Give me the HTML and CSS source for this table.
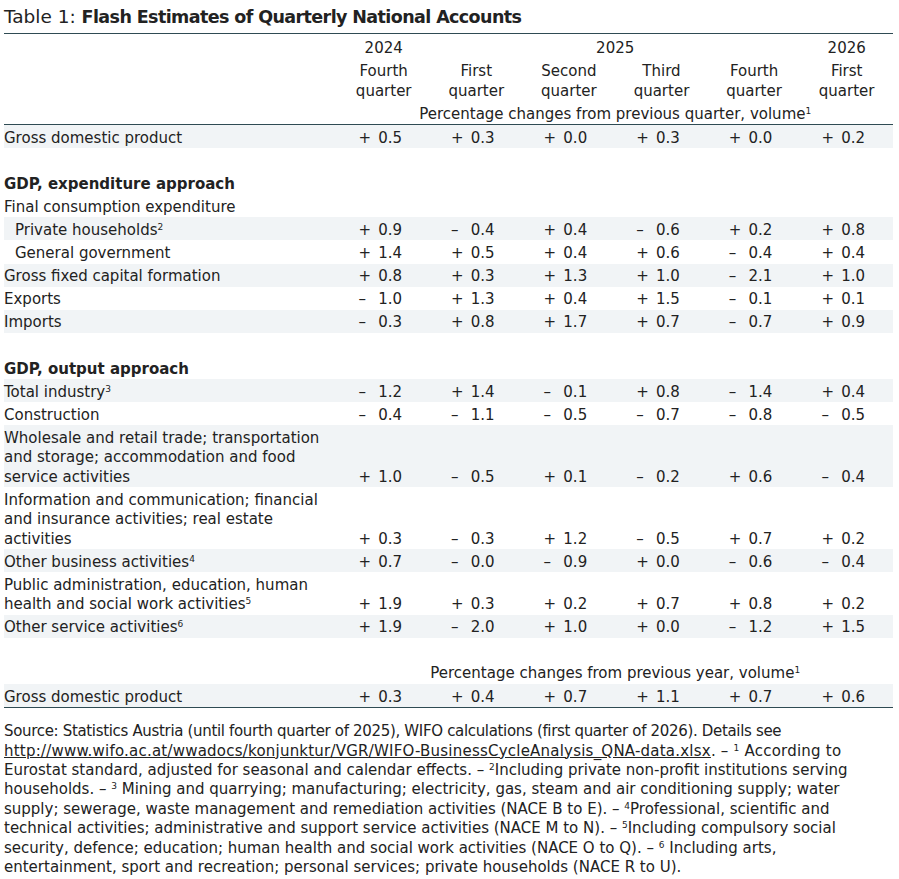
FILE: index.html
```html
<!DOCTYPE html>
<html lang="en">
<head>
<meta charset="utf-8">
<title>Table 1: Flash Estimates of Quarterly National Accounts</title>
<link rel="stylesheet" href="styles.css">
</head>
<body>
<div class="page">
  <h1 class="title">Table 1: <b>Flash Estimates of Quarterly National Accounts</b></h1>
  <table class="tbl">
    <colgroup>
      <col class="c-label">
      <col class="c-num"><col class="c-num"><col class="c-num"><col class="c-num"><col class="c-num"><col class="c-num">
    </colgroup>
    <thead>
      <tr class="h-year">
        <th></th>
        <th>2024</th>
        <th colspan="4">2025</th>
        <th>2026</th>
      </tr>
      <tr class="h-q">
        <th></th>
        <th>Fourth<br>quarter</th>
        <th>First<br>quarter</th>
        <th>Second<br>quarter</th>
        <th>Third<br>quarter</th>
        <th>Fourth<br>quarter</th>
        <th>First<br>quarter</th>
      </tr>
      <tr class="h-unit">
        <th></th>
        <th colspan="6">Percentage changes from previous quarter, volume<sup>1</sup></th>
      </tr>
    </thead>
    <tbody>
      <tr class="sh top">
        <td>Gross domestic product</td>
        <td><div class="n"><span>+</span><span>0.5</span></div></td>
        <td><div class="n"><span>+</span><span>0.3</span></div></td>
        <td><div class="n"><span>+</span><span>0.0</span></div></td>
        <td><div class="n"><span>+</span><span>0.3</span></div></td>
        <td><div class="n"><span>+</span><span>0.0</span></div></td>
        <td><div class="n"><span>+</span><span>0.2</span></div></td>
      </tr>
      <tr class="blank"><td colspan="7"></td></tr>
      <tr><td class="head" colspan="7">GDP, expenditure approach</td></tr>
      <tr><td colspan="7">Final consumption expenditure</td></tr>
      <tr class="sh">
        <td class="ind">Private households<sup>2</sup></td>
        <td><div class="n"><span>+</span><span>0.9</span></div></td>
        <td><div class="n"><span>–</span><span>0.4</span></div></td>
        <td><div class="n"><span>+</span><span>0.4</span></div></td>
        <td><div class="n"><span>–</span><span>0.6</span></div></td>
        <td><div class="n"><span>+</span><span>0.2</span></div></td>
        <td><div class="n"><span>+</span><span>0.8</span></div></td>
      </tr>
      <tr>
        <td class="ind">General government</td>
        <td><div class="n"><span>+</span><span>1.4</span></div></td>
        <td><div class="n"><span>+</span><span>0.5</span></div></td>
        <td><div class="n"><span>+</span><span>0.4</span></div></td>
        <td><div class="n"><span>+</span><span>0.6</span></div></td>
        <td><div class="n"><span>–</span><span>0.4</span></div></td>
        <td><div class="n"><span>+</span><span>0.4</span></div></td>
      </tr>
      <tr class="sh">
        <td>Gross fixed capital formation</td>
        <td><div class="n"><span>+</span><span>0.8</span></div></td>
        <td><div class="n"><span>+</span><span>0.3</span></div></td>
        <td><div class="n"><span>+</span><span>1.3</span></div></td>
        <td><div class="n"><span>+</span><span>1.0</span></div></td>
        <td><div class="n"><span>–</span><span>2.1</span></div></td>
        <td><div class="n"><span>+</span><span>1.0</span></div></td>
      </tr>
      <tr>
        <td>Exports</td>
        <td><div class="n"><span>–</span><span>1.0</span></div></td>
        <td><div class="n"><span>+</span><span>1.3</span></div></td>
        <td><div class="n"><span>+</span><span>0.4</span></div></td>
        <td><div class="n"><span>+</span><span>1.5</span></div></td>
        <td><div class="n"><span>–</span><span>0.1</span></div></td>
        <td><div class="n"><span>+</span><span>0.1</span></div></td>
      </tr>
      <tr class="sh">
        <td>Imports</td>
        <td><div class="n"><span>–</span><span>0.3</span></div></td>
        <td><div class="n"><span>+</span><span>0.8</span></div></td>
        <td><div class="n"><span>+</span><span>1.7</span></div></td>
        <td><div class="n"><span>+</span><span>0.7</span></div></td>
        <td><div class="n"><span>–</span><span>0.7</span></div></td>
        <td><div class="n"><span>+</span><span>0.9</span></div></td>
      </tr>
      <tr class="blank"><td colspan="7"></td></tr>
      <tr><td class="head" colspan="7">GDP, output approach</td></tr>
      <tr class="sh">
        <td>Total industry<sup>3</sup></td>
        <td><div class="n"><span>–</span><span>1.2</span></div></td>
        <td><div class="n"><span>+</span><span>1.4</span></div></td>
        <td><div class="n"><span>–</span><span>0.1</span></div></td>
        <td><div class="n"><span>+</span><span>0.8</span></div></td>
        <td><div class="n"><span>–</span><span>1.4</span></div></td>
        <td><div class="n"><span>+</span><span>0.4</span></div></td>
      </tr>
      <tr>
        <td>Construction</td>
        <td><div class="n"><span>–</span><span>0.4</span></div></td>
        <td><div class="n"><span>–</span><span>1.1</span></div></td>
        <td><div class="n"><span>–</span><span>0.5</span></div></td>
        <td><div class="n"><span>–</span><span>0.7</span></div></td>
        <td><div class="n"><span>–</span><span>0.8</span></div></td>
        <td><div class="n"><span>–</span><span>0.5</span></div></td>
      </tr>
      <tr class="sh">
        <td>Wholesale and retail trade; transportation<br>and storage; accommodation and food<br>service activities</td>
        <td><div class="n"><span>+</span><span>1.0</span></div></td>
        <td><div class="n"><span>–</span><span>0.5</span></div></td>
        <td><div class="n"><span>+</span><span>0.1</span></div></td>
        <td><div class="n"><span>–</span><span>0.2</span></div></td>
        <td><div class="n"><span>+</span><span>0.6</span></div></td>
        <td><div class="n"><span>–</span><span>0.4</span></div></td>
      </tr>
      <tr>
        <td>Information and communication; financial<br>and insurance activities; real estate<br>activities</td>
        <td><div class="n"><span>+</span><span>0.3</span></div></td>
        <td><div class="n"><span>–</span><span>0.3</span></div></td>
        <td><div class="n"><span>+</span><span>1.2</span></div></td>
        <td><div class="n"><span>–</span><span>0.5</span></div></td>
        <td><div class="n"><span>+</span><span>0.7</span></div></td>
        <td><div class="n"><span>+</span><span>0.2</span></div></td>
      </tr>
      <tr class="sh">
        <td>Other business activities<sup>4</sup></td>
        <td><div class="n"><span>+</span><span>0.7</span></div></td>
        <td><div class="n"><span>–</span><span>0.0</span></div></td>
        <td><div class="n"><span>–</span><span>0.9</span></div></td>
        <td><div class="n"><span>+</span><span>0.0</span></div></td>
        <td><div class="n"><span>–</span><span>0.6</span></div></td>
        <td><div class="n"><span>–</span><span>0.4</span></div></td>
      </tr>
      <tr>
        <td>Public administration, education, human<br>health and social work activities<sup>5</sup></td>
        <td><div class="n"><span>+</span><span>1.9</span></div></td>
        <td><div class="n"><span>+</span><span>0.3</span></div></td>
        <td><div class="n"><span>+</span><span>0.2</span></div></td>
        <td><div class="n"><span>+</span><span>0.7</span></div></td>
        <td><div class="n"><span>+</span><span>0.8</span></div></td>
        <td><div class="n"><span>+</span><span>0.2</span></div></td>
      </tr>
      <tr class="sh">
        <td>Other service activities<sup>6</sup></td>
        <td><div class="n"><span>+</span><span>1.9</span></div></td>
        <td><div class="n"><span>–</span><span>2.0</span></div></td>
        <td><div class="n"><span>+</span><span>1.0</span></div></td>
        <td><div class="n"><span>+</span><span>0.0</span></div></td>
        <td><div class="n"><span>–</span><span>1.2</span></div></td>
        <td><div class="n"><span>+</span><span>1.5</span></div></td>
      </tr>
      <tr class="blank"><td colspan="7"></td></tr>
      <tr class="unit">
        <td></td>
        <td colspan="6">Percentage changes from previous year, volume<sup>1</sup></td>
      </tr>
      <tr class="sh last">
        <td>Gross domestic product</td>
        <td><div class="n"><span>+</span><span>0.3</span></div></td>
        <td><div class="n"><span>+</span><span>0.4</span></div></td>
        <td><div class="n"><span>+</span><span>0.7</span></div></td>
        <td><div class="n"><span>+</span><span>1.1</span></div></td>
        <td><div class="n"><span>+</span><span>0.7</span></div></td>
        <td><div class="n"><span>+</span><span>0.6</span></div></td>
      </tr>
    </tbody>
  </table>
  <p class="notes"><span class="tight">Source: Statistics Austria (until fourth quarter of 2025), WIFO calculations (first quarter of 2026). Details see</span><br><span class="loose"><a href="#">http://www.wifo.ac.at/wwadocs/konjunktur/VGR/WIFO-BusinessCycleAnalysis_QNA-data.xlsx</a>. – <sup>1</sup> According to</span><br>Eurostat standard, adjusted for seasonal and calendar effects. – <sup>2</sup>Including private non-profit institutions serving<br>households. – <sup>3</sup> Mining and quarrying; manufacturing; electricity, gas, steam and air conditioning supply; water<br>supply; sewerage, waste management and remediation activities (NACE B to E). – <sup>4</sup>Professional, scientific and<br>technical activities; administrative and support service activities (NACE M to N). – <sup>5</sup>Including compulsory social<br>security, defence; education; human health and social work activities (NACE O to Q). – <sup>6</sup> Including arts,<br>entertainment, sport and recreation; personal services; private households (NACE R to U).</p>
</div>
</body>
</html>
```

FILE: styles.css
```css
html, body {
  margin: 0;
  padding: 0;
  background: #ffffff;
}

body {
  font-family: "DejaVu Sans", "Liberation Sans", sans-serif;
  font-size: 15px;
  color: #222222;
}

.page {
  width: 889px;
  padding: 1px 6px 0 4px;
}

.title {
  margin: 0;
  padding: 4px 0 4px;
  font-size: 18.5px;
  line-height: 24px;
  font-weight: normal;
  border-bottom: 1px solid #2f4b53;
}

.title b {
  font-weight: bold;
  font-size: 17.5px;
  letter-spacing: -0.6px;
}

.tbl {
  width: 889px;
  border-collapse: collapse;
  table-layout: fixed;
}

.c-label { width: 333.4px; }
.c-num { width: 92.6px; }

.tbl th,
.tbl td {
  padding: 3.7px 0 0;
  line-height: 19.4px;
  font-weight: normal;
  text-align: left;
  vertical-align: bottom;
  white-space: nowrap;
}

.tbl th { text-align: center; }

.h-year th { padding-top: 5.15px; padding-bottom: 0; }
.h-q th { padding-top: 3.6px; padding-bottom: 0; }
.h-unit th { padding-top: 3.65px; padding-bottom: 0; }

.tbl tr.top td { border-top: 1px solid #2f4b53; }
.tbl tr.last td { border-bottom: 1px solid #2f4b53; }

.sh td { background: #f1f4f6; }

.blank td { height: 19.4px; }

.head { font-weight: bold !important; }

.ind { padding-left: 11px !important; }

.unit td { text-align: center; }

.n {
  display: flex;
  justify-content: space-between;
  padding: 0 28px 0 21px;
}

sup {
  font-size: 9px;
  line-height: 0;
  vertical-align: 5px;
}

.notes {
  margin: 0;
  padding-top: 14.3px;
  line-height: 19.4px;
  font-size: 15px;
  white-space: nowrap;
}

.notes .tight { letter-spacing: -0.33px; }
.notes .loose { letter-spacing: 0.22px; }

.notes a {
  color: inherit;
  text-decoration: underline;
}
```
